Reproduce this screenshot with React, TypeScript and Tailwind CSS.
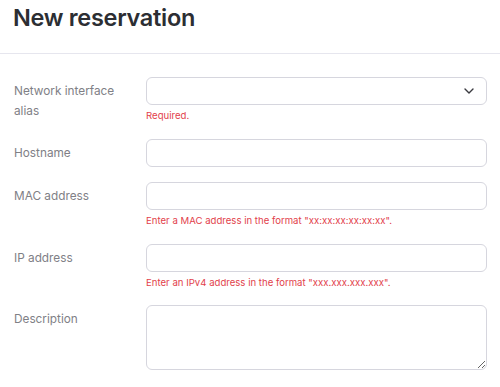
import React from "react";

const font = { fontFamily: "Inter, 'Liberation Sans', sans-serif" };

function Row({
  label,
  children,
  error,
}: {
  label: React.ReactNode;
  children: React.ReactNode;
  error?: string;
}) {
  return (
    <div className="flex">
      <div className="w-[132px] shrink-0 pt-[4px] pr-3 text-[11.8px] leading-[20px] text-[#808086]">
        {label}
      </div>
      <div className="flex-1 flex flex-col">
        {children}
        {error && (
          <div className="mt-1 h-[14px] text-[9.6px] leading-[14px] text-[#e2414b]">{error}</div>
        )}
      </div>
    </div>
  );
}

const inputCls =
  "h-[28px] w-full rounded-[6px] border border-[#d6d6de] bg-white outline-none";

export default function App() {
  return (
    <div className="w-[500px] h-[387px] bg-white overflow-hidden" style={font}>
      <div className="h-[54px] border-b border-[#e6e6ee] px-[13px] pt-[3px]">
        <h1 className="text-[23.5px] leading-[30px] font-semibold text-[#2c2e33] tracking-[-0.3px]">
          New reservation
        </h1>
      </div>
      <div className="px-[13px] pl-[14px] pt-[23px] flex flex-col gap-[15.5px]">
        <Row label={<>Network interface<br />alias</>} error="Required.">
          <div className={inputCls + " flex items-center justify-end pr-[12px]"}>
            <svg width="10" height="6" viewBox="0 0 10 6" fill="none">
              <path d="M1 1l4 4 4-4" stroke="#3a3a40" strokeWidth="1.4" strokeLinecap="round" strokeLinejoin="round" />
            </svg>
          </div>
        </Row>
        <Row label="Hostname">
          <input className={inputCls} />
        </Row>
        <Row label="MAC address" error={'Enter a MAC address in the format "xx:xx:xx:xx:xx:xx".'}>
          <input className={inputCls} />
        </Row>
        <Row label="IP address" error={'Enter an IPv4 address in the format "xxx.xxx.xxx.xxx".'}>
          <input className={inputCls} />
        </Row>
        <Row label="Description">
          <textarea className="h-[65px] w-full rounded-[6px] border border-[#d6d6de] bg-white outline-none" />
        </Row>
      </div>
    </div>
  );
}
